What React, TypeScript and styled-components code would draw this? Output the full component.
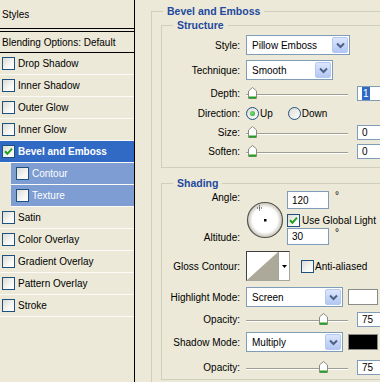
import React from 'react';
import styled, { createGlobalStyle } from 'styled-components';

const GlobalStyle = createGlobalStyle`
  html, body {
    margin: 0;
    padding: 0;
    background: #ECE9D8;
  }
  body {
    font-family: "Liberation Sans", Arial, sans-serif;
    font-size: 10px;
    color: #000;
  }
`;

const Window = styled.div`
  display: flex;
  width: 380px;
  height: 382px;
  overflow: hidden;
  background: #ECE9D8;
`;

/* ---------- left: list of styles ---------- */

const StylesList = styled.div`
  width: 134px;
  flex: none;
  border-right: 1px solid #000;
  display: flex;
  flex-direction: column;
`;

const ListHeader = styled.div`
  height: 28px;
  border-bottom: 1px solid #000;
  display: flex;
  align-items: center;
  padding-left: 2px;
`;

const BlendingRow = styled.div`
  height: 20px;
  margin-top: 2px;
  border-top: 1px solid #000;
  border-bottom: 1px solid #000;
  display: flex;
  align-items: center;
  padding-left: 2px;
`;

type RowState = 'normal' | 'selected' | 'sub';

const StyleRow = styled.div<{ $state: RowState }>`
  height: 21px;
  border-bottom: 1px solid #FBFAF6;
  display: flex;
  align-items: center;
  gap: 3px;
  margin-left: ${p => (p.$state === 'sub' ? '11px' : '0')};
  padding-left: ${p => (p.$state === 'sub' ? '5px' : '2px')};
  background: ${p =>
    p.$state === 'selected' ? '#316AC5' : p.$state === 'sub' ? '#7D9DD3' : 'transparent'};
  color: ${p => (p.$state === 'normal' ? '#000' : '#fff')};
  font-weight: ${p => (p.$state === 'selected' ? 700 : 400)};
  white-space: nowrap;
`;

const CheckFrame = styled.span`
  width: 13px;
  height: 13px;
  box-sizing: border-box;
  flex: none;
  border: 1px solid #1C5180;
  background: linear-gradient(135deg, #DCDBD5 0%, #F6F6F3 60%, #fff 100%);
  display: inline-flex;
  align-items: center;
  justify-content: center;
`;

function CheckBox({ checked }: { checked?: boolean }) {
  return (
    <CheckFrame>
      {checked && (
        <svg width="11" height="11" viewBox="0 0 11 11">
          <path d="M2 5.2 L4.4 7.8 L9 2.6" fill="none" stroke="#21A121" strokeWidth="2" />
        </svg>
      )}
    </CheckFrame>
  );
}

const effects: { name: string; state: RowState; checked?: boolean }[] = [
  { name: 'Drop Shadow', state: 'normal' },
  { name: 'Inner Shadow', state: 'normal' },
  { name: 'Outer Glow', state: 'normal' },
  { name: 'Inner Glow', state: 'normal' },
  { name: 'Bevel and Emboss', state: 'selected', checked: true },
  { name: 'Contour', state: 'sub' },
  { name: 'Texture', state: 'sub' },
  { name: 'Satin', state: 'normal' },
  { name: 'Color Overlay', state: 'normal' },
  { name: 'Gradient Overlay', state: 'normal' },
  { name: 'Pattern Overlay', state: 'normal' },
  { name: 'Stroke', state: 'normal' },
];

/* ---------- right: options ---------- */

const Options = styled.div`
  flex: 1;
  overflow: hidden;
  padding-top: 5px;
`;

const Group = styled.fieldset<{ $ml: number; $mt?: number; $pb?: number }>`
  width: ${p => (p.$ml === 16 ? '260px' : 'auto')};
  margin: ${p => p.$mt ?? 0}px 0 0 ${p => p.$ml}px;
  padding: 0 0 ${p => p.$pb ?? 0}px 0;
  border: 1px solid #D0CEBF;
  border-right: none;
  min-width: 0;
`;

const GroupTitle = styled.legend`
  margin-left: 11px;
  padding: 0 4px;
  color: #1F4A9E;
  font-weight: 700;
  font-size: 10.5px;
  line-height: 12px;
`;

const GroupBody = styled.div<{ $pt: number; $pb?: number }>`
  padding: ${p => p.$pt}px 0 ${p => p.$pb ?? 0}px;
  display: flex;
  flex-direction: column;
`;

const Field = styled.div<{ $h: number; $mt?: number }>`
  display: grid;
  grid-template-columns: 78px auto;
  column-gap: 6px;
  align-items: center;
  height: ${p => p.$h}px;
  margin-top: ${p => p.$mt ?? 0}px;
`;

const Label = styled.span`
  text-align: right;
  white-space: nowrap;
`;

const Controls = styled.div`
  display: flex;
  align-items: center;
  white-space: nowrap;
`;

const SelectBox = styled.div<{ $w: number }>`
  width: ${p => p.$w}px;
  height: 20px;
  box-sizing: border-box;
  border: 1px solid #7F9DB9;
  background: #fff;
  padding: 1px;
  display: flex;
  align-items: center;
  justify-content: space-between;
`;

const SelectText = styled.span`
  padding-left: 4px;
`;

const DropButton = styled.span`
  width: 16px;
  height: 100%;
  box-sizing: border-box;
  border: 1px solid #B4C8F4;
  border-radius: 2px;
  background: linear-gradient(#DCE6FD, #B3C7F3);
  display: flex;
  align-items: center;
  justify-content: center;
`;

function Select({ value, width }: { value: string; width: number }) {
  return (
    <SelectBox $w={width}>
      <SelectText>{value}</SelectText>
      <DropButton>
        <svg width="9" height="7" viewBox="0 0 9 7">
          <path d="M1 1.5 L4.5 5 L8 1.5" fill="none" stroke="#4D6185" strokeWidth="2" />
        </svg>
      </DropButton>
    </SelectBox>
  );
}

const NumberBox = styled.div<{ $w: number; $h: number }>`
  width: ${p => p.$w}px;
  height: ${p => p.$h}px;
  box-sizing: border-box;
  flex: none;
  border: 1px solid #7F9DB9;
  background: #fff;
  padding-left: 4px;
  display: flex;
  align-items: center;
`;

const Highlighted = styled.span`
  background: #316AC5;
  color: #fff;
  padding: 1px 1px;
`;

const Degree = styled.span`
  align-self: flex-start;
  margin-left: 4px;
  line-height: 10px;
`;

const SliderArea = styled.div`
  position: relative;
  width: 102px;
  height: 18px;
  flex: none;
  margin-right: 9px;
  display: flex;
  align-items: center;
`;

const Rail = styled.div`
  width: 100%;
  height: 1px;
  margin-top: 4px;
  background: #A09E92;
  border-bottom: 1px solid #fff;
`;

const Thumb = styled.svg`
  position: absolute;
  top: 3px;
`;

function Slider({ value }: { value: number }) {
  return (
    <SliderArea>
      <Rail />
      <Thumb width="9" height="12" viewBox="0 0 9 12" style={{ left: 2 + value * 0.94 }}>
        <path d="M0.5 4 L4.5 0.5 L8.5 4 V11.5 H0.5 Z" fill="#fff" stroke="#8C8B80" />
        <path d="M1 10.5 H8" stroke="#21A121" strokeWidth="2" />
      </Thumb>
    </SliderArea>
  );
}

const RadioFrame = styled.span`
  width: 13px;
  height: 13px;
  box-sizing: border-box;
  flex: none;
  border: 1px solid #1C5180;
  border-radius: 50%;
  background: linear-gradient(135deg, #DCDBD5 0%, #fff 100%);
  display: inline-flex;
  align-items: center;
  justify-content: center;
`;

const RadioDot = styled.span`
  width: 5px;
  height: 5px;
  border-radius: 50%;
  background: radial-gradient(circle at 40% 40%, #7BE07B, #21A121);
`;

const Choice = styled.span<{ $ml?: number }>`
  display: inline-flex;
  align-items: center;
  gap: 1px;
  margin-left: ${p => p.$ml ?? 0}px;
`;

const AngleBlock = styled.div`
  display: flex;
  height: 54px;
  margin-top: 2px;
`;

const LabelStack = styled.div`
  width: 78px;
  flex: none;
  display: flex;
  flex-direction: column;
  justify-content: space-between;
  align-items: flex-end;
  padding: 1px 0 2px;
  box-sizing: border-box;
`;

const Dial = styled.svg`
  margin: 10px 0 0 6px;
  flex: none;
`;

const ValueStack = styled.div`
  margin-left: 3px;
  display: flex;
  flex-direction: column;
`;

const ValueLine = styled.div<{ $mt?: number }>`
  display: flex;
  align-items: center;
  gap: 2px;
  margin-top: ${p => p.$mt ?? 0}px;
  white-space: nowrap;
`;

const ContourPicker = styled.div`
  width: 44px;
  height: 30px;
  box-sizing: border-box;
  border: 1px solid #404040;
  border-right-color: #A8A69A;
  border-bottom-color: #A8A69A;
  background: #fff;
  display: flex;
`;

const ContourArrow = styled.span`
  flex: 1;
  border-left: 1px solid #A8A69A;
  display: flex;
  align-items: center;
  justify-content: center;
`;

const Swatch = styled.div<{ $color: string }>`
  width: 30px;
  height: 16px;
  box-sizing: border-box;
  margin-left: 5px;
  border: 1px solid #8A8A8A;
  background: ${p => p.$color};
`;

export default function App() {
  return (
    <>
      <GlobalStyle />
      <Window>
        <StylesList>
          <ListHeader>Styles</ListHeader>
          <BlendingRow>Blending Options: Default</BlendingRow>
          {effects.map(e => (
            <StyleRow key={e.name} $state={e.state}>
              <CheckBox checked={e.checked} />
              {e.name}
            </StyleRow>
          ))}
        </StylesList>

        <Options>
          <Group $ml={16} $pb={30}>
            <GroupTitle>Bevel and Emboss</GroupTitle>

            <Group $ml={9} $mt={2}>
              <GroupTitle>Structure</GroupTitle>
              <GroupBody $pt={4} $pb={7}>
                <Field $h={20}>
                  <Label>Style:</Label>
                  <Select value="Pillow Emboss" width={104} />
                </Field>
                <Field $h={20} $mt={5}>
                  <Label>Technique:</Label>
                  <Select value="Smooth" width={87} />
                </Field>
                <Field $h={18} $mt={4}>
                  <Label>Depth:</Label>
                  <Controls>
                    <Slider value={0} />
                    <NumberBox $w={30} $h={15}>
                      <Highlighted>1</Highlighted>
                    </NumberBox>
                  </Controls>
                </Field>
                <Field $h={18} $mt={2}>
                  <Label>Direction:</Label>
                  <Controls>
                    <Choice>
                      <RadioFrame>
                        <RadioDot />
                      </RadioFrame>
                      Up
                    </Choice>
                    <Choice $ml={15}>
                      <RadioFrame />
                      Down
                    </Choice>
                  </Controls>
                </Field>
                <Field $h={18} $mt={1}>
                  <Label>Size:</Label>
                  <Controls>
                    <Slider value={0} />
                    <NumberBox $w={30} $h={15}>0</NumberBox>
                  </Controls>
                </Field>
                <Field $h={18} $mt={1}>
                  <Label>Soften:</Label>
                  <Controls>
                    <Slider value={0} />
                    <NumberBox $w={30} $h={15}>0</NumberBox>
                  </Controls>
                </Field>
              </GroupBody>
            </Group>

            <Group $ml={9} $mt={9} $pb={2}>
              <GroupTitle>Shading</GroupTitle>
              <GroupBody $pt={0}>
                <AngleBlock>
                  <LabelStack>
                    <span>Angle:</span>
                    <span>Altitude:</span>
                  </LabelStack>
                  <Dial width="38" height="38" viewBox="0 0 38 38">
                    <defs>
                      <radialGradient id="dialFill" cx="50%" cy="50%" r="50%">
                        <stop offset="70%" stopColor="#fff" />
                        <stop offset="100%" stopColor="#C9C7BC" />
                      </radialGradient>
                    </defs>
                    <circle cx="19" cy="19" r="17.5" fill="url(#dialFill)" stroke="#555550" strokeWidth="1.2" />
                    <circle cx="19" cy="19" r="15.8" fill="none" stroke="#D8D6CC" strokeWidth="1" />
                    <rect x="18" y="18" width="2.5" height="2.5" fill="#000" />
                    <path d="M13.5 4.5 V9.5 M11 7 H16" stroke="#333" strokeWidth="1" strokeDasharray="1 1" />
                  </Dial>
                  <ValueStack>
                    <ValueLine>
                      <NumberBox $w={42} $h={18}>120</NumberBox>
                      <Degree>°</Degree>
                    </ValueLine>
                    <ValueLine $mt={5}>
                      <CheckBox checked />
                      Use Global Light
                    </ValueLine>
                    <ValueLine $mt={1}>
                      <NumberBox $w={42} $h={17}>30</NumberBox>
                      <Degree>°</Degree>
                    </ValueLine>
                  </ValueStack>
                </AngleBlock>

                <Field $h={30} $mt={6}>
                  <Label>Gloss Contour:</Label>
                  <Controls>
                    <ContourPicker>
                      <svg width="31" height="28" viewBox="0 0 31 28">
                        <path d="M0 28 L31 0 V28 Z" fill="#ADA99A" />
                      </svg>
                      <ContourArrow>
                        <svg width="5" height="3" viewBox="0 0 5 3">
                          <path d="M0 0 H5 L2.5 3 Z" fill="#000" />
                        </svg>
                      </ContourArrow>
                    </ContourPicker>
                    <Choice $ml={11}>
                      <CheckBox />
                      Anti-aliased
                    </Choice>
                  </Controls>
                </Field>

                <Field $h={20} $mt={6}>
                  <Label>Highlight Mode:</Label>
                  <Controls>
                    <Select value="Screen" width={97} />
                    <Swatch $color="#fff" />
                  </Controls>
                </Field>
                <Field $h={20} $mt={2}>
                  <Label>Opacity:</Label>
                  <Controls>
                    <Slider value={75} />
                    <NumberBox $w={30} $h={15}>75</NumberBox>
                  </Controls>
                </Field>
                <Field $h={20} $mt={3}>
                  <Label>Shadow Mode:</Label>
                  <Controls>
                    <Select value="Multiply" width={97} />
                    <Swatch $color="#000" />
                  </Controls>
                </Field>
                <Field $h={20} $mt={5}>
                  <Label>Opacity:</Label>
                  <Controls>
                    <Slider value={75} />
                    <NumberBox $w={30} $h={15}>75</NumberBox>
                  </Controls>
                </Field>
              </GroupBody>
            </Group>
          </Group>
        </Options>
      </Window>
    </>
  );
}
